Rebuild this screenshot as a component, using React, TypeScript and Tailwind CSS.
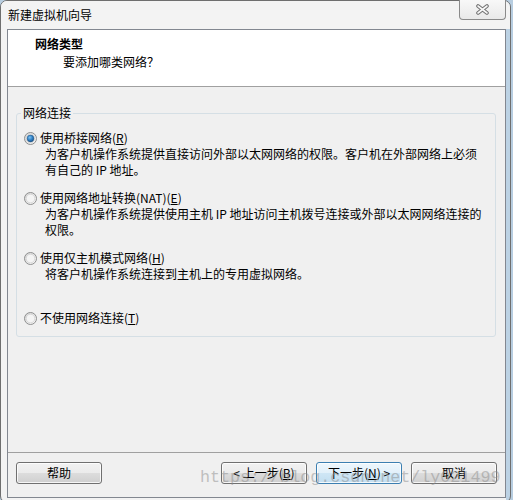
import React, { useId } from "react";

const options = [
  {
    label: "使用桥接网络(",
    key: "R",
    checked: true,
    lines: [
      "为客户机操作系统提供直接访问外部以太网网络的权限。客户机在外部网络上必须",
      "有自己的 IP 地址。",
    ],
  },
  {
    label: "使用网络地址转换(NAT)(",
    key: "E",
    checked: false,
    lines: [
      "为客户机操作系统提供使用主机 IP 地址访问主机拨号连接或外部以太网网络连接的",
      "权限。",
    ],
  },
  {
    label: "使用仅主机模式网络(",
    key: "H",
    checked: false,
    lines: ["将客户机操作系统连接到主机上的专用虚拟网络。"],
  },
  {
    label: "不使用网络连接(",
    key: "T",
    checked: false,
    lines: [],
  },
];

const Radio = ({ checked }: { checked: boolean }) => {
  const id = useId();
  return (
    <svg width="13" height="13" viewBox="0 0 13 13" className="shrink-0">
      <defs>
        <linearGradient id={`${id}-ring`} x1="0" y1="0" x2="1" y2="1">
          <stop offset="0" stopColor="#d4d4d4" />
          <stop offset="1" stopColor="#fbfbfb" />
        </linearGradient>
        <radialGradient id={`${id}-dot`} cx="0.4" cy="0.35" r="0.7">
          <stop offset="0" stopColor="#7cc2f2" />
          <stop offset="0.55" stopColor="#2f7fc4" />
          <stop offset="1" stopColor="#174f86" />
        </radialGradient>
      </defs>
      <circle cx="6.5" cy="6.5" r="6" fill={`url(#${id}-ring)`} stroke="#8e8f8f" />
      <circle cx="6.5" cy="6.5" r="4.3" fill="#f4f4f4" stroke="#c9c9c9" strokeWidth="0.6" />
      {checked && <circle cx="6.5" cy="6.5" r="3.4" fill={`url(#${id}-dot)`} stroke="#1d4f7c" strokeWidth="0.5" />}
    </svg>
  );
};

const Button = ({ children, primary }: { children: React.ReactNode; primary?: boolean }) => (
  <div
    className={`w-[86px] h-[22px] rounded-[3px] border flex items-center justify-center text-[12px] leading-[16px] text-black shadow-[inset_0_0_0_1px_rgba(255,255,255,0.8)] ${
      primary
        ? "border-[#3c7fb1] bg-[linear-gradient(#eef7fd_0%,#e2f0fa_50%,#cfe6f5_50%,#c2def1_100%)]"
        : "border-[#707070] bg-[linear-gradient(#f2f2f2_0%,#ebebeb_50%,#dddddd_50%,#cfcfcf_100%)]"
    }`}
  >
    {children}
  </div>
);

const CloseGlyph = () => (
  <svg width="15" height="11" viewBox="0 0 15 11">
    <path d="M3 2 L12 9 M12 2 L3 9" stroke="#707070" strokeWidth="3.6" strokeLinecap="round" />
    <path d="M3 2 L12 9 M12 2 L3 9" stroke="#f7f7f7" strokeWidth="1.6" strokeLinecap="round" />
  </svg>
);

export default function App() {
  return (
    <div className="relative w-[513px] h-[500px] overflow-hidden bg-[#b7cde0] font-['Noto_Sans_CJK_SC',sans-serif] text-[12px] leading-[16px] text-black">
      {/* window */}
      <div className="w-[511px] h-[503px] border border-[#6e6e6e] rounded-[7px] flex flex-col bg-[linear-gradient(90deg,#f3f3f3_0,#f3f3f3_505px,#bcd2e4_505px)]">
        {/* title bar */}
        <div className="h-[28px] flex justify-between items-start bg-[#f3f3f3] rounded-t-[6px]">
          <span className="mt-[6px] ml-[7px]">新建虚拟机向导</span>
          <div className="-mt-[1px] mr-[4px] w-[47px] h-[20px] border border-t-0 border-[#8a8a8a] rounded-b-[4px] bg-[linear-gradient(#f8f8f8,#e9e9e9)] flex items-center justify-center">
            <CloseGlyph />
          </div>
        </div>

        {/* client area */}
        <div className="ml-[6px] w-[499px] border border-[#828790] flex flex-col">
          {/* header */}
          <div className="h-[57px] bg-white border-b border-[#a0a0a0] pt-[6px]">
            <div className="pl-[27px] font-bold">网络类型</div>
            <div className="pl-[55px] mt-[2px]">要添加哪类网络？</div>
          </div>

          {/* body */}
          <div className="h-[365px] bg-[#f0f0f0] pt-[18px]">
            <fieldset className="ml-[8px] w-[480px] border border-[#d5dfe5] rounded-[3px] pt-[9px] pb-[10px] pl-[7px]">
              <legend className="ml-[-3px] px-[2px] leading-[16px]">网络连接</legend>
              {options.map((opt, i) => (
                <div key={opt.key} className={i === options.length - 1 ? "h-[16px]" : "h-[60px]"}>
                  <div className="flex items-center gap-[3px] h-[16px] whitespace-nowrap">
                    <Radio checked={opt.checked} />
                    <span>
                      {opt.label}
                      <span className="underline">{opt.key}</span>)
                    </span>
                  </div>
                  {opt.lines.map((line) => (
                    <div key={line} className="pl-[21px] whitespace-nowrap">
                      {line}
                    </div>
                  ))}
                </div>
              ))}
            </fieldset>
          </div>

          {/* footer buttons */}
          <div className="h-[45px] bg-[#f0f0f0] border-t border-[#a0a0a0] pt-[9px] px-[8px] flex items-start">
            <Button>帮助</Button>
            <div className="flex-1" />
            <div className="flex gap-[9px]">
              <Button>
                &lt; 上一步(<span className="underline">B</span>)
              </Button>
              <Button primary>
                下一步(<span className="underline">N</span>) &gt;
              </Button>
              <Button>取消</Button>
            </div>
          </div>
        </div>
      </div>

      {/* blog watermark */}
      <div className="pointer-events-none absolute left-[200px] top-[470px] font-['Liberation_Mono',monospace] text-[16.7px] leading-none text-[rgba(140,140,140,0.5)] whitespace-nowrap">
        https://blog.csdn.net/ly021499
      </div>
    </div>
  );
}
